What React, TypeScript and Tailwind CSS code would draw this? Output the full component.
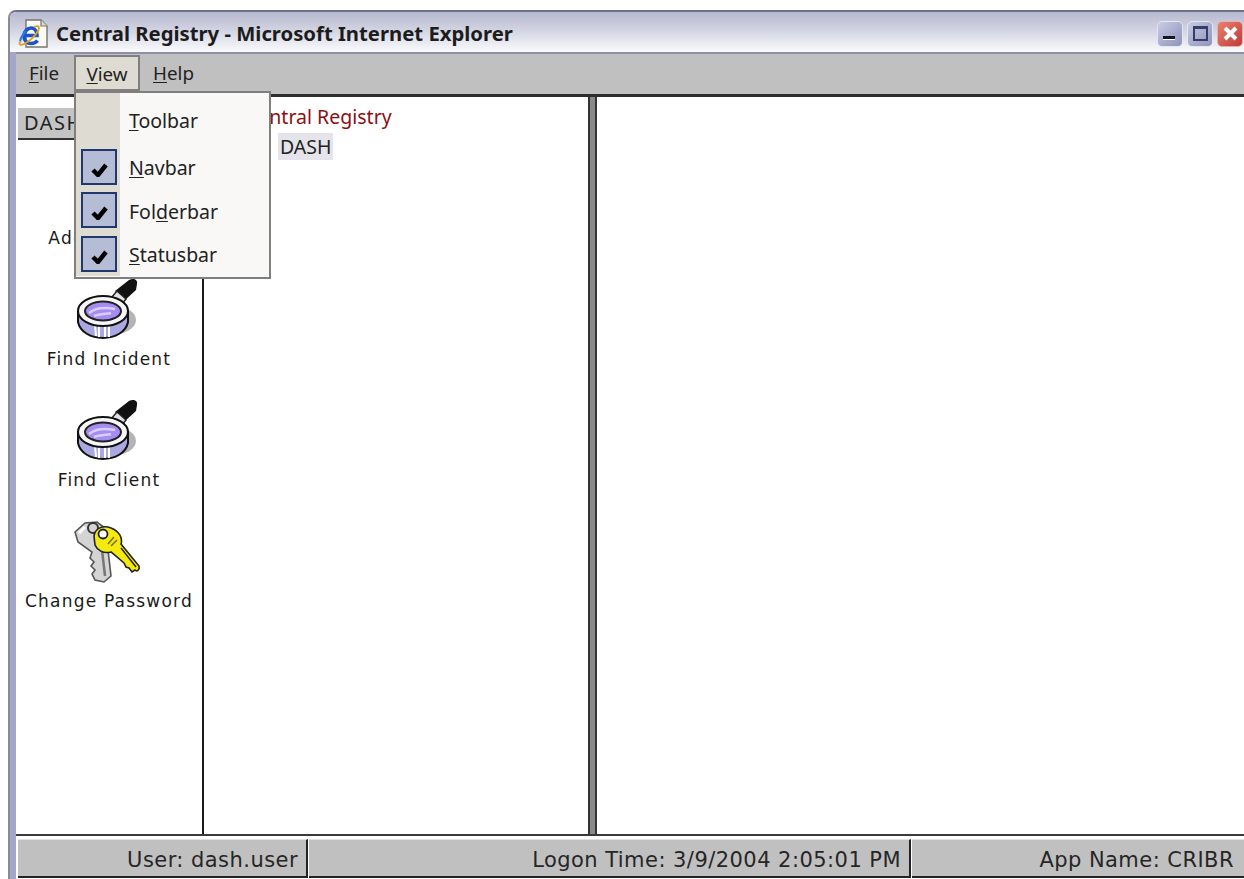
const uiFont = "font-['Noto_Sans','DejaVu_Sans',sans-serif]"

function IeIcon() {
  return (
    <svg width="34" height="34" viewBox="0 0 34 34" className="shrink-0">
      <path d="M10 3h15l6 6v21H10z" fill="#fbfbf6" stroke="#77756c" strokeWidth="1.4" />
      <path d="M25 3v6h6" fill="#dcdad0" stroke="#77756c" strokeWidth="1.2" />
      <path d="M9 18.500h12c0-5-3-7.500-6-7.500s-7 3-7 8 3.500 7.500 7 7.500 5-1 6.500-3" fill="none" stroke="#1a55c8" strokeWidth="3.600" />
      <path d="M5 24c-3 3-1 5 3 3 5-2.500 11-8 14-13 2-4 1-6-4-4" fill="none" stroke="#e0a020" strokeWidth="1.800" />
      <path d="M4 24c1-4 3-7 6-10" fill="none" stroke="#2c7be0" strokeWidth="2" />
    </svg>
  )
}

function Magnifier() {
  return (
    <svg width="64" height="62" viewBox="0 0 64 62">
      <ellipse cx="34" cy="42" rx="25" ry="15" fill="#b4b4b4" />
      {/* black handle and its collar */}
      <path d="M38 13L52 2c4-2 9-1 8 4l-1 6-12 11z" fill="#111" />
      <path d="M34 20l6-7 9 8-6 7z" fill="#e2e2e2" stroke="#222" strokeWidth="1.500" />
      {/* rim of the glass */}
      <path d="M1 33v11c2 10 13 16 25 16s23-6 25-16V33z" fill="#aaa8e0" stroke="#111" strokeWidth="2" />
      <path d="M18 47l1 11M22 48v11M28 48v11M32 48v11" stroke="#fff" strokeWidth="2" />
      <ellipse cx="26" cy="33" rx="25" ry="15" fill="#f6f6f6" stroke="#111" strokeWidth="2" />
      <ellipse cx="26" cy="33" rx="18" ry="9.500" fill="#a68cf0" stroke="#222" strokeWidth="2" />
      <path d="M12 35c6-5 16-6 26-4M17 38c6-2 12-2 17-3" stroke="#d6d0ff" strokeWidth="2.500" fill="none" />
    </svg>
  )
}

function Keys() {
  return (
    <svg width="64" height="62" viewBox="0 0 64 62" className="overflow-visible">
      {/* grey key behind the yellow one */}
      <path d="M-2 12L8 3l12-1 8 6 3 22 3 26-7 6-9-2-3-6 3-4-4-4 3-4-4-4 2-6L1 22z" fill="#d4d4d4" stroke="#555" strokeWidth="1.600" />
      <path d="M25 30l3 26" stroke="#777" strokeWidth="2.500" />
      <path d="M2 13l6-6" stroke="#fff" strokeWidth="3" fill="none" />
      <circle cx="16" cy="8" r="5" fill="none" stroke="#333" strokeWidth="2" />
      {/* yellow key */}
      <path d="M17 16c1-8 9-11 17-8 8 3 12 10 10 16l18 22c1 4-2 6-4 4l-3 2-3-4-3-1-2-4-13-11c-8 2-14-2-16-7z" fill="#f4ea10" stroke="#222" strokeWidth="1.600" />
      <circle cx="26" cy="14" r="4.500" fill="#fff" stroke="#222" strokeWidth="1.800" />
      <path d="M31 24l6-7M34 26l6-6" stroke="#7a7408" strokeWidth="1.600" />
      <path d="M44 28l15 19" stroke="#222" strokeWidth="1.400" />
    </svg>
  )
}

function NavItem({ label, icon }: { label: string; icon: React.ReactNode }) {
  return (
    <div className="flex h-[121px] flex-col items-center">
      <div className="h-[62px] w-[64px]">{icon}</div>
      <span className="mt-[8px] font-['DejaVu_Sans',sans-serif] text-[17px] leading-[22px] tracking-[1.2px] whitespace-nowrap text-[#1a1a1a]">
        {label}
      </span>
    </div>
  )
}

function CaptionButton({ kind }: { kind: 'min' | 'max' | 'close' }) {
  if (kind === 'close') {
    return (
      <div className="flex h-[26px] w-[26px] items-center justify-center rounded-[5px] border border-[#e8b0a8] bg-gradient-to-br from-[#e88070] to-[#c03838]">
        <svg width="17" height="17" viewBox="0 0 17 17">
          <path d="M3 3l11 11M14 3L3 14" stroke="#fff" strokeWidth="4" />
        </svg>
      </div>
    )
  }
  return (
    <div className="flex h-[26px] w-[26px] items-center justify-center rounded-[5px] border border-[#e4e6f2] bg-gradient-to-br from-[#c8cce4] to-[#8f94bb]">
      {kind === 'min' ? (
        <div className="mt-[8px] mr-[2px] h-[4px] w-[12px] border-t-[3px] border-[#15152c] bg-white" />
      ) : (
        <div className="h-[15px] w-[15px] border-2 border-t-[3px] border-[#3a3c68]" />
      )}
    </div>
  )
}

function MenuRow({ check, children, tall }: { check?: boolean; children: React.ReactNode; tall?: boolean }) {
  return (
    <div className={`flex items-center ${tall ? 'h-[52px]' : 'h-[43.5px]'}`}>
      <div className="flex h-full w-[44px] shrink-0 items-center justify-center bg-[#dedbd3] pl-[2px]">
        {check && (
          <div className="flex h-[36px] w-[36px] items-end justify-center border-2 border-[#21386f] bg-[#b4bcd6] pb-[6px]">
            <svg width="17" height="14" viewBox="0 0 17 14">
              <path d="M2 7l5 5 8-10" fill="none" stroke="#000" strokeWidth="4.500" />
            </svg>
          </div>
        )}
      </div>
      <span className={`ml-[9px] text-[19.5px] leading-none text-[#222] ${tall ? 'pt-[3px]' : 'pt-[2px]'}`}>{children}</span>
    </div>
  )
}

function ViewMenu() {
  return (
    <div className={`absolute top-[91px] left-[74px] z-10 w-[197px] border-2 border-[#7f7f7f] bg-[#f9f8f6] pb-[1px] ${uiFont}`}>
      <MenuRow tall>
        <u className="underline-offset-2">T</u>oolbar
      </MenuRow>
      <MenuRow check>
        <u className="underline-offset-2">N</u>avbar
      </MenuRow>
      <MenuRow check>
        Fol<u className="underline-offset-2">d</u>erbar
      </MenuRow>
      <MenuRow check>
        <u className="underline-offset-2">S</u>tatusbar
      </MenuRow>
    </div>
  )
}

function StatusCell({ className, children }: { className: string; children: string }) {
  return (
    <div className={`flex h-full items-center justify-end border-t border-b-2 border-t-[#e2e2e2] border-b-[#222] bg-[#c0c0c0] ${className}`}>
      <span className="pt-[5px] font-['DejaVu_Sans',sans-serif] text-[21px] tracking-[0.45px] whitespace-nowrap text-[#262626]">
        {children}
      </span>
    </div>
  )
}

export default function App() {
  return (
    <div className="relative h-[879px] w-[1244px] overflow-hidden bg-white pt-[10px] pl-[8px]">
      <ViewMenu />

      <div className="flex h-[869px] flex-col overflow-hidden rounded-tl-[8px] border-t-2 border-l-2 border-t-[#70708f] border-l-[#8a8a96]">
        {/* caption */}
        <div className="flex h-[40px] shrink-0 items-center bg-gradient-to-b from-[#b6b8cf] via-[#d5d7e4] to-[#fbfbfd] pt-[3px] pr-[1px] pl-[6px]">
          <IeIcon />
          <span className={`ml-[6px] text-[20.3px] font-bold whitespace-nowrap text-[#1c1c1c] ${uiFont}`}>
            Central Registry - Microsoft Internet Explorer
          </span>
          <div className="ml-auto flex gap-[4px]">
            <CaptionButton kind="min" />
            <CaptionButton kind="max" />
            <CaptionButton kind="close" />
          </div>
        </div>

        <div className="flex min-h-0 flex-1 border-l-[6px] border-l-[#a3a6c6]">
          <div className="flex min-w-0 flex-1 flex-col">
            {/* menu bar */}
            <div className={`flex h-[45px] shrink-0 items-center border-t-2 border-b-[3px] border-t-[#8d8fa8] border-b-[#2e2e2e] bg-[#c0c0c0] text-[18.8px] text-[#222] ${uiFont}`}>
              <span className="mb-[1px] ml-[13px]">
                <u className="underline-offset-2">F</u>ile
              </span>
              <span className="mb-[2px] ml-[15px] flex h-[36px] w-[66px] items-center justify-center border-2 border-[#7f7f7f] bg-[#dedbd3] pt-[2px]">
                <u className="underline-offset-2">V</u>iew
              </span>
              <span className="mb-[1px] ml-[13px]">
                <u className="underline-offset-2">H</u>elp
              </span>
            </div>

            <div className="flex min-h-0 flex-1 border-b-2 border-b-[#3a3a3a]">
              {/* nav column */}
              <div className="flex w-[188px] shrink-0 flex-col border-r-2 border-r-[#1a1a1a]">
                <div className={`mt-[11px] ml-[2px] flex h-[32px] w-[80px] items-center border-b-2 border-b-[#333] bg-[#c4c4c4] pl-[6px] text-[20px] tracking-[1.5px] text-[#222] ${uiFont}`}>
                  DASH
                </div>
                <div className="mt-[17px] flex flex-col">
                  <NavItem label="Add Incident" icon={<Magnifier />} />
                  <NavItem label="Find Incident" icon={<Magnifier />} />
                  <NavItem label="Find Client" icon={<Magnifier />} />
                  <NavItem label="Change Password" icon={<Keys />} />
                </div>
              </div>

              {/* tree column */}
              <div className={`w-[384px] shrink-0 pt-[8px] pl-[42px] text-[19.5px] ${uiFont}`}>
                <div className="leading-[24px] text-[#8c0f0f]">Central Registry</div>
                <div className="mt-[4px] ml-[32px] inline-block bg-[#e4e4ea] px-[2px] text-[19.5px] leading-[27px] text-[#222]">
                  DASH
                </div>
              </div>

              {/* splitter */}
              <div className="w-[9px] shrink-0 border-x-2 border-x-[#333] bg-[#8a8a8a]" />
              <div className="flex-1" />
            </div>

            {/* status bar */}
            <div className="flex h-[43px] shrink-0 gap-[1px] pt-[3px] pb-[1px] pl-[2px]">
              <StatusCell className="w-[290px] border-r-2 border-r-[#222] pr-[8px]">User: dash.user</StatusCell>
              <StatusCell className="w-[602px] border-r-2 border-r-[#222] pr-[8px]">Logon Time: 3/9/2004 2:05:01 PM</StatusCell>
              <StatusCell className="flex-1 pr-[10px]">App Name: CRIBR</StatusCell>
            </div>
          </div>
        </div>
      </div>
    </div>
  )
}
